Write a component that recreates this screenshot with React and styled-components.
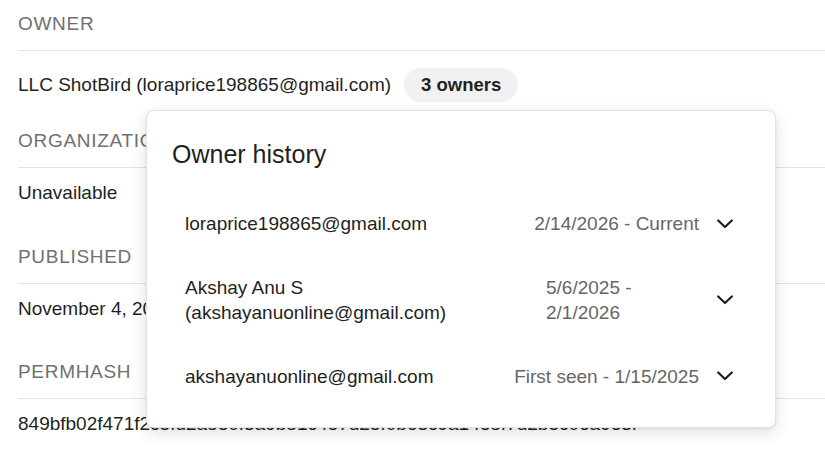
import styled, { createGlobalStyle } from 'styled-components';

const GlobalStyle = createGlobalStyle`
  html, body {
    margin: 0;
    padding: 0;
    background: #fff;
  }
  body {
    font-family: "Liberation Sans", Arial, Helvetica, sans-serif;
    color: #1f1f1f;
    overflow: hidden;
  }
`;

const Page = styled.div`
  position: relative;
  width: 825px;
  height: 454px;
  padding: 11px 0 0 18px;
  box-sizing: border-box;
  overflow: hidden;
`;

const Section = styled.section`
  display: flex;
  flex-direction: column;
`;

const Label = styled.div`
  font-size: 19px;
  line-height: 26px;
  letter-spacing: 0.7px;
  text-transform: uppercase;
  color: #707070;
  padding-bottom: 13px;
  border-bottom: 1px solid #e3e3e3;
  white-space: nowrap;
`;

const Value = styled.div`
  display: flex;
  align-items: center;
  gap: 13px;
  font-size: 19px;
  line-height: 26px;
  color: #1f1f1f;
  white-space: nowrap;
  padding: ${p => (p.$chip ? '17px 0 26px' : '12px 0 37.5px')};
`;

const Chip = styled.span`
  display: inline-flex;
  align-items: center;
  height: 34px;
  padding: 0 17px;
  border-radius: 17px;
  background: #f1f1f1;
  font-size: 18.5px;
  font-weight: 700;
  color: #1f1f1f;
`;

const Popover = styled.div`
  position: absolute;
  left: 146px;
  top: 110px;
  width: 630px;
  height: 318px;
  box-sizing: border-box;
  background: #fff;
  border: 1px solid #e2e2e2;
  border-radius: 8px;
  box-shadow: 0 5px 16px rgba(0, 0, 0, 0.12), 0 1px 3px rgba(0, 0, 0, 0.06);
  padding: 28px 42px 19px 25px;
  display: flex;
  flex-direction: column;
`;

const Title = styled.h2`
  margin: 0 0 23px;
  font-size: 25px;
  line-height: 30px;
  font-weight: 400;
  color: #1f1f1f;
`;

const List = styled.div`
  display: flex;
  flex-direction: column;
  padding-left: 13px;
`;

const Row = styled.div`
  display: flex;
  align-items: center;
  padding: 19px 0;
  font-size: 19px;
  line-height: 25.5px;
`;

const Name = styled.div`
  flex: 1;
  color: #1f1f1f;
`;

const Dates = styled.div`
  flex: none;
  color: #666;
  text-align: left;
  ${p => p.$width && `width: ${p.$width}px;`}
`;

const Chevron = styled.svg`
  flex: none;
  width: 16px;
  height: 10px;
  margin-left: 18px;
`;

const ChevronDown = () => (
  <Chevron viewBox="0 0 16 10" fill="none">
    <polyline points="1.2,1.5 8,8 14.8,1.5" stroke="#1f1f1f" strokeWidth="2.2" strokeLinecap="round" strokeLinejoin="round" />
  </Chevron>
);

const owners = [
  { name: ['loraprice198865@gmail.com'], dates: '2/14/2026 - Current' },
  { name: ['Akshay Anu S', '(akshayanuonline@gmail.com)'], dates: '5/6/2025 - 2/1/2026', width: 153 },
  { name: ['akshayanuonline@gmail.com'], dates: 'First seen - 1/15/2025' },
];

const App = () => {
  return (
    <>
      <GlobalStyle />
      <Page>
        <Section>
          <Label>Owner</Label>
          <Value $chip>
            LLC ShotBird (loraprice198865@gmail.com)
            <Chip>3 owners</Chip>
          </Value>
        </Section>
        <Section>
          <Label>Organization</Label>
          <Value>Unavailable</Value>
        </Section>
        <Section>
          <Label>Published</Label>
          <Value>November 4, 2025</Value>
        </Section>
        <Section>
          <Label>Permhash</Label>
          <Value>849bfb02f471f2c5fd2a8e0f3a9b81c4e7d25f0b63c9a14e8f7d2b5c06a9e3f</Value>
        </Section>

        <Popover>
          <Title>Owner history</Title>
          <List>
            {owners.map((o, i) => (
              <Row key={i}>
                <Name>
                  {o.name.map((line, j) => (
                    <div key={j}>{line}</div>
                  ))}
                </Name>
                <Dates $width={o.width}>{o.dates}</Dates>
                <ChevronDown />
              </Row>
            ))}
          </List>
        </Popover>
      </Page>
    </>
  );
};

export default App;
